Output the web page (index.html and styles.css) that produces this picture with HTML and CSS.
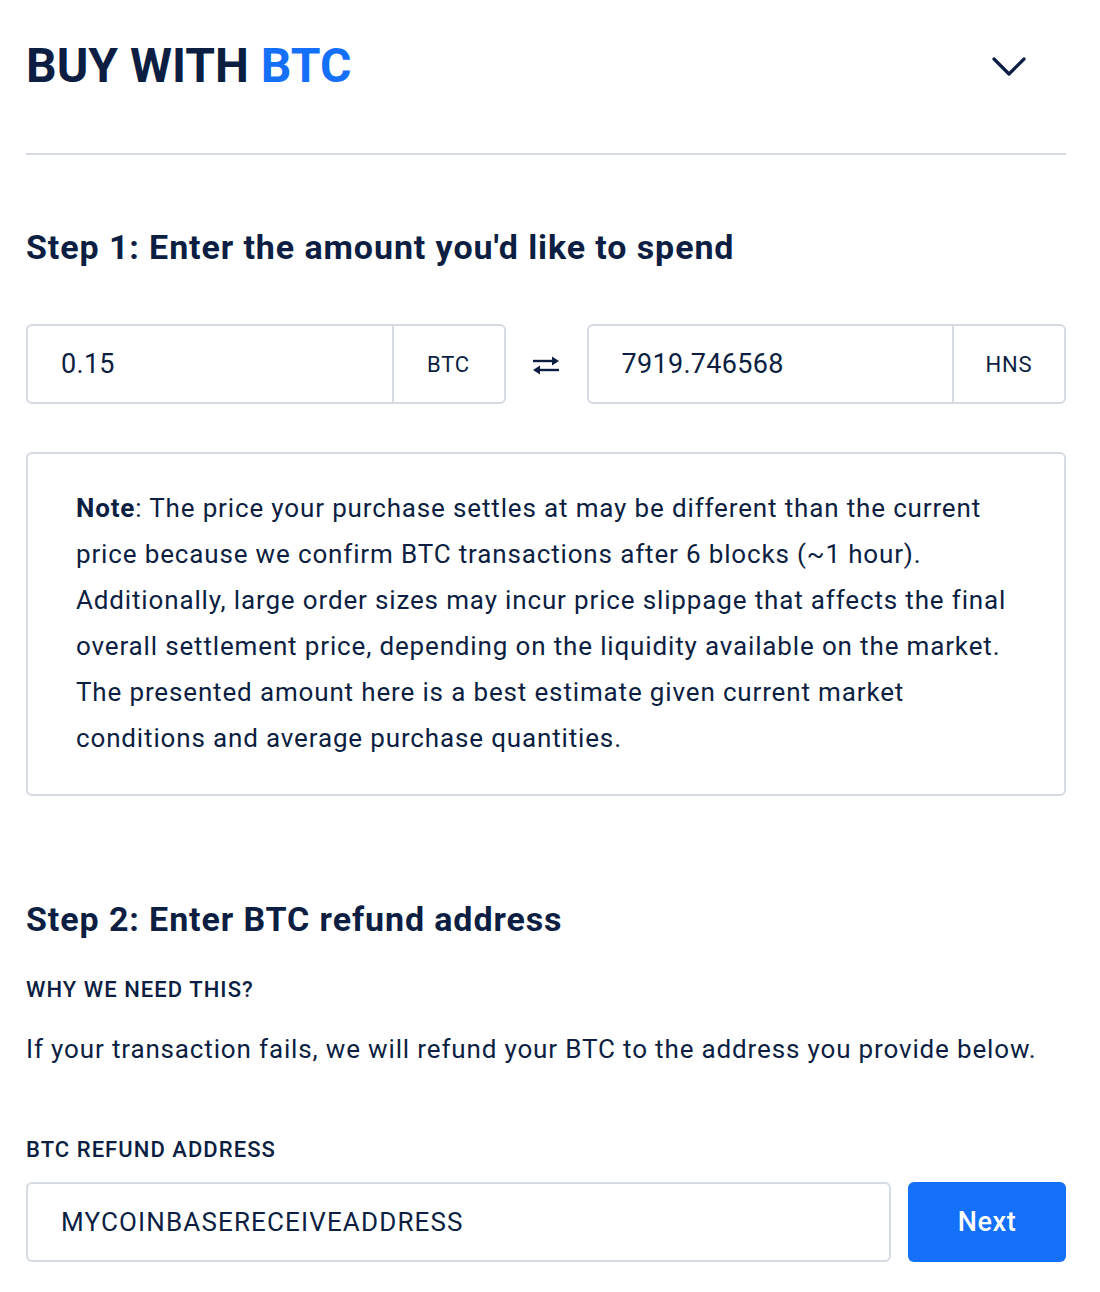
FILE: index.html
```html
<!DOCTYPE html>
<html>
<head>
<meta charset="utf-8">
<link rel="stylesheet" href="styles.css">
</head>
<body>
<div class="page">
  <header class="header">
    <h1 class="title">BUY WITH <span class="accent">BTC</span></h1>
    <svg class="chevron" width="34" height="20" viewBox="0 0 34 20"><path d="M2 2 L17 17 L32 2" fill="none" stroke="#0c1f43" stroke-width="3.2" stroke-linecap="round" stroke-linejoin="round"/></svg>
  </header>
  <section class="step1">
    <h2 class="step-title">Step 1: Enter the amount you'd like to spend</h2>
    <div class="amount-row">
      <div class="field">
        <div class="field-value">0.15</div>
        <div class="field-unit">BTC</div>
      </div>
      <div class="swap">
        <svg width="28" height="20" viewBox="0 0 28 20"><path d="M1 6 H22" stroke="#0c1f43" stroke-width="2.4" fill="none"/><path d="M20 1.5 L27 6 L20 10.5 Z" fill="#0c1f43"/><path d="M6 15 H27" stroke="#0c1f43" stroke-width="2.4" fill="none"/><path d="M8 10.5 L1 15 L8 19.5 Z" fill="#0c1f43"/></svg>
      </div>
      <div class="field">
        <div class="field-value">7919.746568</div>
        <div class="field-unit">HNS</div>
      </div>
    </div>
    <div class="note">
      <p><strong>Note</strong>: The price your purchase settles at may be different than the current price because we confirm BTC transactions after 6 blocks (~1 hour). Additionally, large order sizes may incur price slippage that affects the final overall settlement price, depending on the liquidity available on the market. The presented amount here is a best estimate given current market conditions and average purchase quantities.</p>
    </div>
  </section>
  <section class="step2">
    <h2 class="step-title">Step 2: Enter BTC refund address</h2>
    <div class="label why">WHY WE NEED THIS?</div>
    <p class="desc">If your transaction fails, we will refund your BTC to the address you provide below.</p>
    <div class="label addr-label">BTC REFUND ADDRESS</div>
    <div class="addr-row">
      <div class="addr-input">MYCOINBASERECEIVEADDRESS</div>
      <button class="next">Next</button>
    </div>
  </section>
</div>
</body>
</html>
```

FILE: styles.css
```css
* { box-sizing: border-box; }
html, body { margin: 0; padding: 0; background: #fff; }
body {
  font-family: Roboto, "Liberation Sans", Arial, sans-serif;
  color: #0c1f43;
}
.page {
  width: 1100px;
  padding: 0 34px 0 26px;
}
.header {
  display: flex;
  align-items: center;
  justify-content: space-between;
  height: 155px;
  border-bottom: 2px solid #d6dae4;
  padding-bottom: 22px;
}
.title {
  margin: 0;
  font-size: 48px;
  font-weight: 700;
  letter-spacing: 0;
}
.accent { color: #1570f9; }
.chevron { margin-right: 40px; margin-top: 2px; }
.step1 { padding-top: 70px; }
.step-title {
  margin: 0;
  font-size: 34px;
  font-weight: 700;
  line-height: 44px;
  letter-spacing: 0.9px;
}
.amount-row {
  display: flex;
  align-items: center;
  margin-top: 55px;
}
.field {
  flex: 1;
  display: flex;
  height: 80px;
  border: 2px solid #d6dae4;
  border-radius: 6px;
}
.field-value {
  flex: 1;
  display: flex;
  align-items: center;
  padding-left: 33px;
  font-size: 27px;
  letter-spacing: 0.3px;
}
.field-unit {
  width: 112px;
  border-left: 2px solid #d6dae4;
  display: flex;
  align-items: center;
  justify-content: center;
  font-size: 22px;
  letter-spacing: 0.8px;
}
.swap {
  width: 81px;
  display: flex;
  justify-content: center;
  align-items: center;
  padding-top: 2px;
}
.note {
  margin-top: 48px;
  border: 2px solid #d6dae4;
  border-radius: 6px;
  padding: 31px 50px 33px 48px;
}
.note p {
  margin: 0;
  font-size: 26px;
  line-height: 46px;
  letter-spacing: 0.85px;
}
.note strong { font-weight: 700; }
.step2 { padding-top: 101px; }
.label {
  font-size: 22px;
  font-weight: 500;
  line-height: 30px;
  letter-spacing: 1.05px;
}
.why { margin-top: 34px; }
.desc {
  margin: 26px 0 0;
  font-size: 26px;
  line-height: 36px;
  letter-spacing: 0.85px;
}
.addr-label { margin-top: 68px; }
.addr-row {
  display: flex;
  gap: 17px;
  margin-top: 17px;
}
.addr-input {
  flex: 1;
  height: 80px;
  border: 2px solid #d6dae4;
  border-radius: 6px;
  display: flex;
  align-items: center;
  padding-left: 33px;
  font-size: 26px;
  letter-spacing: 1.15px;
}
.next {
  width: 158px;
  height: 80px;
  border: none;
  border-radius: 6px;
  background: #1570f9;
  color: #fff;
  font-family: Roboto, "Liberation Sans", Arial, sans-serif;
  font-size: 27px;
  font-weight: 500;
  letter-spacing: 0.6px;
}
```
